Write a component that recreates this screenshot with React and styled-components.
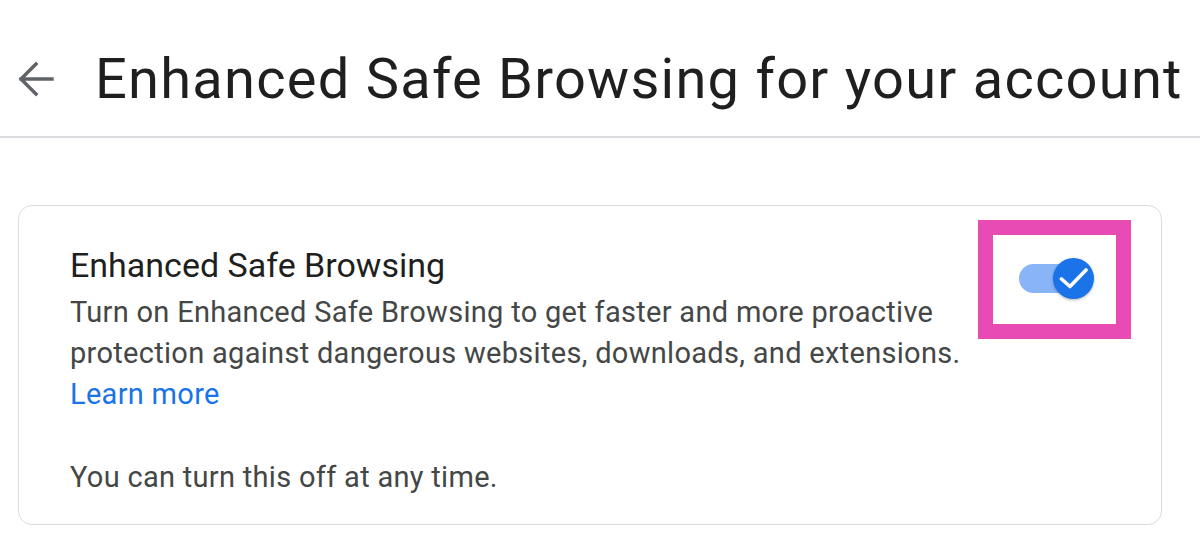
import React from "react";
import styled, { createGlobalStyle } from "styled-components";

const Global = createGlobalStyle`
  body {
    margin: 0;
    background: #fff;
    font-family: Roboto, "Noto Sans", Arial, sans-serif;
  }
`;

const Page = styled.div`
  width: 1200px;
  height: 541px;
  overflow: hidden;
  background: #fff;
`;

const Header = styled.header`
  display: flex;
  align-items: center;
  height: 138px;
  border-bottom: 2px solid #dadce0;
  padding: 22px 0 0 18px;
  box-sizing: border-box;
`;

const BackButton = styled.button`
  display: flex;
  align-items: center;
  justify-content: center;
  width: 36px;
  height: 36px;
  padding: 0;
  margin: 0 41px 0 0;
  border: none;
  background: none;
  color: #5f6368;
`;

const Title = styled.h1`
  margin: 0;
  font-size: 56px;
  font-weight: 400;
  letter-spacing: 1.25px;
  line-height: 66px;
  color: #1f1f1f;
  white-space: nowrap;
`;

const Main = styled.main`
  padding: 67px 38px 0 18px;
`;

const Card = styled.section`
  display: flex;
  border: 1.5px solid #dadce0;
  border-radius: 14px;
  padding: 38px 30px 26px 51px;
`;

const Content = styled.div`
  flex: 1;
`;

const CardTitle = styled.h2`
  margin: 0 0 6px;
  font-size: 34px;
  font-weight: 400;
  line-height: 42px;
  color: #1f1f1f;
`;

const Text = styled.p`
  margin: ${(p) => (p.$spaced ? "42px 0 0" : "0")};
  font-size: 29px;
  letter-spacing: 0.3px;
  line-height: 41px;
  color: #444746;
  white-space: nowrap;
`;

const Link = styled.a`
  color: #1a73e8;
  text-decoration: none;
`;

const Highlight = styled.div`
  display: flex;
  align-items: center;
  justify-content: center;
  align-self: flex-start;
  width: 153px;
  height: 119px;
  margin-top: -24px;
  border: 15px solid #e94bb5;
  box-sizing: border-box;
`;

const Switch = styled.div`
  position: relative;
  width: 75px;
  height: 41px;
  margin: -3px -4px 0 0;
`;

const Track = styled.div`
  position: absolute;
  left: 0;
  top: 6px;
  width: 61px;
  height: 29px;
  border-radius: 15px;
  background: #8ab4f8;
`;

const Knob = styled.div`
  position: absolute;
  right: 0;
  top: 0;
  width: 41px;
  height: 41px;
  border-radius: 50%;
  background: #1a73e8;
  box-shadow: 0 1px 3px rgba(0, 0, 0, 0.3);
  display: flex;
  align-items: center;
  justify-content: center;
`;

const BackArrow = () => (
  <svg width="36" height="36" viewBox="0 0 36 36" fill="none">
    <path
      d="M34 18H3M18 3L3 18l15 15"
      stroke="currentColor"
      strokeWidth="3.4"
      strokeLinecap="square"
    />
  </svg>
);

const Check = () => (
  <svg width="30" height="30" viewBox="0 0 30 30" fill="none">
    <path
      d="M2.5 16l8.5 7.5L27 7"
      stroke="#fff"
      strokeWidth="3.6"
      strokeLinecap="round"
      strokeLinejoin="round"
    />
  </svg>
);

export default function App() {
  return (
    <Page>
      <Global />
      <Header>
        <BackButton aria-label="Back">
          <BackArrow />
        </BackButton>
        <Title>Enhanced Safe Browsing for your account</Title>
      </Header>
      <Main>
        <Card>
          <Content>
            <CardTitle>Enhanced Safe Browsing</CardTitle>
            <Text>
              Turn on Enhanced Safe Browsing to get faster and more proactive
              <br />
              protection against dangerous websites, downloads, and extensions.
              <br />
              <Link href="#">Learn more</Link>
            </Text>
            <Text $spaced>You can turn this off at any time.</Text>
          </Content>
          <Highlight>
            <Switch role="switch" aria-checked="true">
              <Track />
              <Knob>
                <Check />
              </Knob>
            </Switch>
          </Highlight>
        </Card>
      </Main>
    </Page>
  );
}
